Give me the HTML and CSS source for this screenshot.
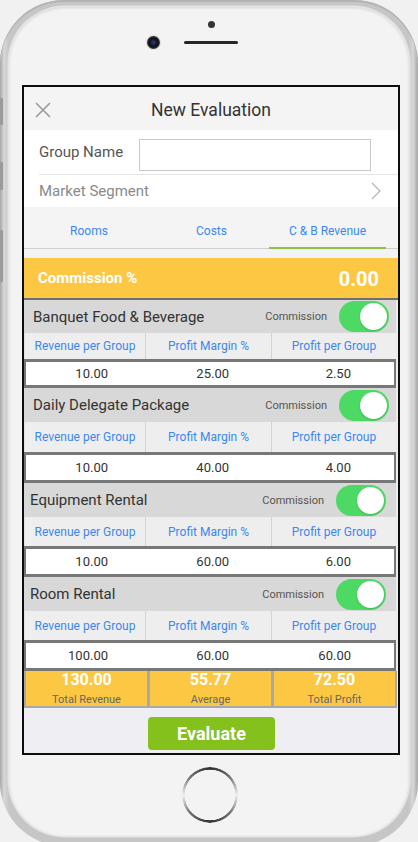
FILE: index.html
```html
<!DOCTYPE html>
<html lang="en">
<head>
<meta charset="utf-8">
<title>New Evaluation</title>
<link rel="stylesheet" href="styles.css">
</head>
<body>
<div class="phone">
  <span class="side side-1"></span>
  <span class="side side-2"></span>
  <span class="side side-3"></span>
  <div class="face">
    <div class="sensors">
      <span class="dot"></span>
      <span class="camera"></span>
      <span class="speaker"></span>
    </div>
    <div class="screen">
      <header class="app-head">
        <svg class="close" width="16" height="16" viewBox="0 0 16 16"><path d="M1 1 L15 15 M15 1 L1 15" stroke="#9a9a9a" stroke-width="1.6" fill="none"/></svg>
        <h1 class="title">New Evaluation</h1>
        <span></span>
      </header>
      <div class="form">
        <div class="group-row">
          <span class="label">Group Name</span>
          <span class="input"></span>
        </div>
        <div class="market-row">
          <span>Market Segment</span>
          <svg width="10" height="18" viewBox="0 0 10 18"><path d="M1 1 L9 9 L1 17" stroke="#b4b4b4" stroke-width="1.2" fill="none"/></svg>
        </div>
      </div>
      <nav class="tabs">
        <span class="tab">Rooms</span>
        <span class="tab">Costs</span>
        <span class="tab active">C &amp; B Revenue</span>
        <span></span>
      </nav>
      <div class="commission">
        <span class="c-label">Commission %</span>
        <span class="c-value">0.00</span>
      </div>
      <div class="sections">
        <section class="item first">
          <div class="item-head">
            <span class="item-title">Banquet Food &amp; Beverage</span>
            <span class="comm">Commission</span>
            <span class="toggle"><span class="knob"></span></span>
          </div>
          <div class="cols"><span>Revenue per Group</span><span>Profit Margin %</span><span>Profit per Group</span></div>
          <div class="vals"><span>10.00</span><span>25.00</span><span>2.50</span></div>
        </section>
        <section class="item second">
          <div class="item-head">
            <span class="item-title">Daily Delegate Package</span>
            <span class="comm">Commission</span>
            <span class="toggle"><span class="knob"></span></span>
          </div>
          <div class="cols"><span>Revenue per Group</span><span>Profit Margin %</span><span>Profit per Group</span></div>
          <div class="vals"><span>10.00</span><span>40.00</span><span>4.00</span></div>
        </section>
        <section class="item shifted">
          <div class="item-head">
            <span class="item-title">Equipment Rental</span>
            <span class="comm">Commission</span>
            <span class="toggle"><span class="knob"></span></span>
          </div>
          <div class="cols"><span>Revenue per Group</span><span>Profit Margin %</span><span>Profit per Group</span></div>
          <div class="vals"><span>10.00</span><span>60.00</span><span>6.00</span></div>
        </section>
        <section class="item shifted">
          <div class="item-head">
            <span class="item-title">Room Rental</span>
            <span class="comm">Commission</span>
            <span class="toggle"><span class="knob"></span></span>
          </div>
          <div class="cols"><span>Revenue per Group</span><span>Profit Margin %</span><span>Profit per Group</span></div>
          <div class="vals"><span>100.00</span><span>60.00</span><span>60.00</span></div>
        </section>
      </div>
      <div class="totals">
        <div class="total"><b>130.00</b><small>Total Revenue</small></div>
        <div class="total"><b>55.77</b><small>Average</small></div>
        <div class="total"><b>72.50</b><small>Total Profit</small></div>
      </div>
      <div class="actions">
        <button class="evaluate">Evaluate</button>
      </div>
    </div>
    <div class="home-area"><span class="home"></span></div>
  </div>
</div>
</body>
</html>
```
FILE: styles.css
```css
* { box-sizing: border-box; }
html, body { margin: 0; height: 100%; }
body {
  background: #f1f1f1;
  font-family: Roboto, "Noto Sans", Arial, sans-serif;
  overflow: hidden;
}
.phone {
  position: relative;
  width: 418px;
  height: 846px;
  padding: 7px 9px 0 9px;
  border-radius: 64px;
  background: linear-gradient(90deg, #a6a6a6 0, #d8d8d8 4px, #c6c6c6 9px, #c6c6c6 409px, #d8d8d8 413px, #a6a6a6 418px);
  box-shadow: inset 0 2px 0 #b4b4b4;
}
.side {
  position: absolute;
  left: 0;
  width: 3px;
  background: #9b9b9b;
  border-radius: 1px;
}
.side-1 { top: 98px; height: 27px; }
.side-2 { top: 162px; height: 28px; }
.side-3 { top: 230px; height: 52px; }
.face {
  height: 829px;
  border-radius: 56px;
  background: #f3f3f3;
  display: flex;
  flex-direction: column;
  box-shadow: 0 0 0 1.5px #e4e4e4, inset 0 1px 3px rgba(0,0,0,.12);
}
.sensors {
  flex: none;
  height: 78px;
  display: grid;
  grid-template-columns: 1fr 54px 1fr;
  grid-template-rows: 21px 28px;
  padding-left: 4px;
}
.dot {
  grid-column: 2; grid-row: 1;
  justify-self: center; align-self: end;
  width: 7px; height: 7px; border-radius: 50%;
  background: #333;
}
.camera {
  grid-column: 1; grid-row: 2;
  justify-self: end; align-self: center;
  margin-right: 24px;
  width: 13px; height: 13px; border-radius: 50%;
  background: radial-gradient(circle, #1c2f78 0 1.5px, #151a2a 3px, #111 4.5px, #3a3a3a 6.5px);
  box-shadow: 0 0 2px rgba(0,0,0,.35);
}
.speaker {
  grid-column: 2; grid-row: 2;
  align-self: center;
  height: 3px;
  background: #262626;
  border-radius: 2px;
}
.screen {
  flex: none;
  width: 378px;
  height: 670px;
  margin-left: 13px;
  border: 2px solid #0e0e0e;
  background: #f3f3f5;
  display: flex;
  flex-direction: column;
  overflow: hidden;
}
.app-head {
  flex: none;
  height: 43px;
  background: #f4f4f4;
  display: grid;
  grid-template-columns: 1fr auto 1fr;
  align-items: center;
}
.close { margin-left: 11px; margin-top: 2px; }
.title {
  margin: 2px 0 0;
  font-size: 17.5px;
  font-weight: normal;
  color: #333;
}
.form { background: #fff; flex: none; }
.group-row {
  height: 45px;
  margin-left: 15px;
  display: flex;
  align-items: center;
  border-bottom: 1px solid #e3e3e3;
}
.label {
  width: 100px;
  font-size: 15px;
  color: #555;
}
.input {
  align-self: flex-end;
  margin-bottom: 3px;
  width: 232px;
  height: 32px;
  border: 1px solid #c9c9c9;
  background: #fff;
}
.market-row {
  height: 32px;
  margin-left: 15px;
  padding-right: 17px;
  display: flex;
  align-items: center;
  justify-content: space-between;
  font-size: 15px;
  color: #8a8a8a;
}
.tabs {
  flex: none;
  height: 42px;
  background: #f4f4f4;
  border-bottom: 1px solid #d0d0d0;
  display: grid;
  grid-template-columns: 130px 115px 117px 1fr;
}
.tab {
  display: flex;
  align-items: center;
  justify-content: center;
  padding-top: 6px;
  font-size: 12px;
  color: #3b87f3;
}
.tab.active {
  border-bottom: 2px solid #8cc43e;
  margin-bottom: -1px;
  padding-top: 7px;
}
.commission {
  flex: none;
  margin-top: 9px;
  height: 40px;
  background: #fcc844;
  color: #fff;
  font-weight: bold;
  display: flex;
  align-items: center;
  justify-content: space-between;
  padding: 0 19px 0 14px;
}
.c-label { font-size: 15px; }
.c-value { font-size: 20px; margin-top: 2px; }
.sections {
  flex: none;
  border-top: 2px solid #6f6f6f;
  padding-right: 2px;
  background: #ececec;
}
.item-head {
  height: 34px;
  background: #d8d8d8;
  display: flex;
  align-items: center;
  padding: 0 7px 0 9px;
}
.item.first .item-head { height: 33px; }
.item.shifted .item-head { padding: 0 10px 0 6px; }
.item-title {
  flex: 1;
  font-size: 15px;
  color: #333;
}
.comm {
  font-size: 11px;
  color: #555;
  margin-right: 12px;
}
.toggle {
  width: 50px;
  height: 31px;
  border-radius: 16px;
  background: #4cd964;
  display: flex;
  align-items: center;
  justify-content: flex-end;
  padding-right: 2px;
}
.knob {
  width: 27px;
  height: 27px;
  border-radius: 50%;
  background: #fff;
  box-shadow: 0 1px 2px rgba(0,0,0,.15);
}
.cols {
  display: grid;
  grid-template-columns: 121px 126px 1fr;
  height: 29px;
  background: #eeeeee;
}
.item.first .cols { height: 26px; }
.item.second .cols { height: 30px; }
.cols span {
  display: flex;
  align-items: center;
  justify-content: center;
  font-size: 12px;
  color: #3b87f3;
  border-left: 1px solid #d3d3d3;
}
.cols span:first-child { border-left-color: #e2e2e2; }
.vals {
  display: grid;
  grid-template-columns: 119px 126px 1fr;
  height: 31px;
  background: #fff;
  border-style: solid;
  border-color: #777;
  border-width: 3px 2px;
}
.item.first .vals { height: 29px; }
.vals span {
  display: flex;
  align-items: center;
  justify-content: flex-end;
  font-size: 13px;
  color: #333;
}
.vals span:nth-child(1) { padding-right: 37px; }
.vals span:nth-child(2) { padding-right: 42px; }
.vals span:nth-child(3) { padding-right: 43px; }
.totals {
  flex: none;
  display: grid;
  grid-template-columns: repeat(3, 1fr);
  gap: 3px;
  padding: 0 2px 2px;
  margin-right: 1px;
  background: #a8a8a8;
}
.total {
  height: 35px;
  background: #fcc844;
  display: flex;
  flex-direction: column;
  align-items: center;
}
.total b {
  font-size: 16px;
  line-height: 18px;
  color: #fff;
}
.total small {
  margin-top: 4px;
  font-size: 11px;
  line-height: 13px;
  color: #666;
}
.actions {
  flex: 1;
  background: #eeeef3;
  display: flex;
  justify-content: center;
  align-items: flex-start;
  padding: 9px 0 0 1px;
}
.evaluate {
  width: 127px;
  height: 33px;
  border: none;
  border-radius: 4px;
  background: #85c11c;
  color: #fff;
  font-family: Roboto, "Noto Sans", Arial, sans-serif;
  font-weight: bold;
  font-size: 18px;
  padding: 0;
}
.home-area {
  flex: 1;
  display: flex;
  justify-content: center;
  align-items: flex-start;
  padding: 12px 0 0 2px;
}
.home {
  width: 56px;
  height: 56px;
  border-radius: 50%;
  background: conic-gradient(#2e2e2e 0deg, #777 50deg, #f0f0f0 90deg, #777 130deg, #2e2e2e 180deg, #777 230deg, #f0f0f0 270deg, #777 310deg, #2e2e2e 360deg);
  -webkit-mask: radial-gradient(circle, transparent 25px, #000 25.6px);
  mask: radial-gradient(circle, transparent 25px, #000 25.6px);
}
```
